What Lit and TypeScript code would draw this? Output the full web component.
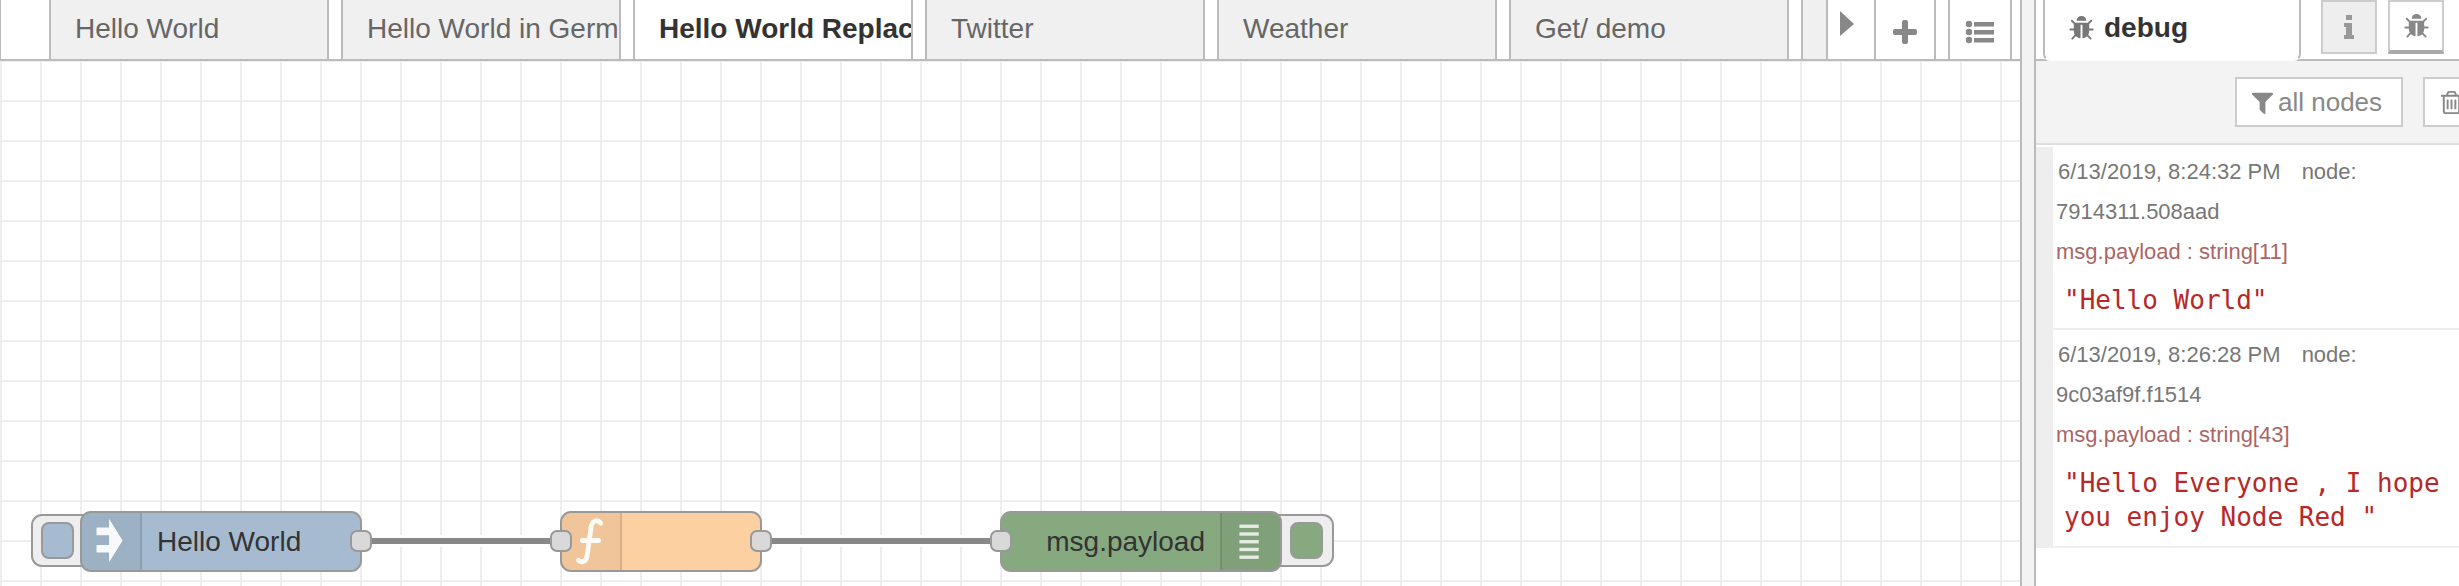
import { LitElement, html, css, svg } from "lit";
import { customElement } from "lit/decorators.js";

const BUG = "M1696 960q0 26-19 45t-45 19h-224q0 171-67 290l208 209q19 19 19 45t-19 45q-18 19-45 19t-45-19l-198-197q-5 5-15 13t-42 28.500-65 36.500-82 29-97 13v-896h-128v896q-51 0-101.500-13.500t-87-33-66-39-43.500-32.500l-15-14-183 207q-20 21-48 21-24 0-43-16-19-18-20.500-44.500t15.500-46.500l202-227q-58-114-58-274h-224q-26 0-45-19t-19-45 19-45 45-19h224v-294l-173-173q-19-19-19-45t19-45 45-19 45 19l173 173h844l173-173q19-19 45-19t45 19 19 45-19 45l-173 173v294h224q26 0 45 19t19 45zm-480-576h-640q0-133 93.500-226.500t226.500-93.500 226.500 93.500 93.500 226.500z";
const FILTER = "M1595 295q17 41-14 70l-493 493v742q0 42-39 59-13 5-25 5-27 0-45-19l-256-256q-19-19-19-45v-486l-493-493q-31-29-14-70 17-39 59-39h1280q42 0 59 39z";
const TRASH = "M704 736v576q0 14-9 23t-23 9h-64q-14 0-23-9t-9-23v-576q0-14 9-23t23-9h64q14 0 23 9t9 23zm256 0v576q0 14-9 23t-23 9h-64q-14 0-23-9t-9-23v-576q0-14 9-23t23-9h64q14 0 23 9t9 23zm256 0v576q0 14-9 23t-23 9h-64q-14 0-23-9t-9-23v-576q0-14 9-23t23-9h64q14 0 23 9t9 23zm128 724v-948h-896v948q0 22 7 40.500t14.500 27 10.500 8.500h832q3 0 10.500-8.500t14.500-27 7-40.500zm-672-1076h448l-48-117q-7-9-17-11h-317q-10 2-17 11zm928 32v64q0 14-9 23t-23 9h-96v948q0 83-47 143.500t-113 60.500h-832q-66 0-113-58.500t-47-141.500v-952h-96q-14 0-23-9t-9-23v-64q0-14 9-23t23-9h309l70-167q15-37 54-63t79-26h320q40 0 79 26t54 63l70 167h309q14 0 23 9t9 23z";

const fa = (d: string, size: number, fill = "#888") => html`<svg class="fa" width=${size} height=${size} viewBox="0 0 1792 1792"><path d=${d} fill=${fill}></path></svg>`;

const TABS = ["Hello World", "Hello World in German", "Hello World Replace", "Twitter", "Weather", "Get/ demo"];

const MESSAGES = [
  { date: "6/13/2019, 8:24:32 PM", id: "7914311.508aad", type: "msg.payload : string[11]", value: '"Hello World"' },
  { date: "6/13/2019, 8:26:28 PM", id: "9c03af9f.f1514", type: "msg.payload : string[43]", value: '"Hello Everyone , I hope you enjoy Node Red "' },
];

@customElement("app-root")
export class AppRoot extends LitElement {
  static styles = css`
    :host { display: block; width: 2459px; height: 586px; overflow: hidden; background: #fff; font-family: "Liberation Sans", Arial, sans-serif; }
    * { box-sizing: border-box; }
    .fa { display: block; flex: none; }
    .app { display: flex; width: 2459px; height: 586px; }
    .main { width: 2020px; display: flex; flex-direction: column; flex: none; }
    .tabbar { height: 61px; flex: none; display: flex; border-bottom: 2px solid #bbb; border-left: 1px solid #bbb; padding-left: 48px; gap: 12px; overflow: hidden; }
    .tab { width: 280px; height: 59px; flex: none; background: #f0f0f0; border: solid #bbb; border-width: 0 2px; padding-left: 24px; font-size: 28px; line-height: 58px; color: #666; white-space: nowrap; overflow: hidden; }
    .tab.active { height: 61px; background: #fff; color: #333; font-weight: 700; }
    .tab.stub { width: 25px; padding: 0; border-right: 0; margin-right: -12px; }
    .tbtn { flex: none; height: 59px; background: #fff; border: solid #bbb; border-width: 0 2px; display: flex; justify-content: center; }
    .tbtn.arrow { width: 50px; margin-right: -14px; padding: 11px 0 0 11px; justify-content: flex-start; }
    .tbtn.plus { width: 62px; padding-top: 20px; }
    .tbtn.list { width: 64px; padding-top: 20px; }
    .workspace { flex: 1; position: relative; overflow: hidden;
      background-color: #fff;
      background-image: linear-gradient(#eee 2px, transparent 2px), linear-gradient(90deg, #eee 2px, transparent 2px);
      background-size: 40px 40px; background-position: 0 39px, 0 0; }
    .wire { position: absolute; top: 474px; height: 12px; background: #fff; display: flex; align-items: center; }
    .wire::after { content: ""; display: block; width: 100%; height: 6px; background: #888; }
    .w1 { left: 372px; width: 180px; }
    .w2 { left: 772px; width: 220px; }
    .node { position: absolute; top: 450px; height: 61px; border: 2px solid #999; border-radius: 11px; font-size: 28px; color: #333; display: flex; align-items: center; }
    .n1 { left: 80px; width: 282px; background: #a6bbcf; }
    .n2 { left: 560px; width: 202px; background: #fdd0a2; }
    .n3 { left: 1000px; width: 282px; background: #87a980; justify-content: flex-end; }
    .ico { width: 60px; height: 57px; flex: none; background: rgba(0,0,0,.05); display: block; }
    .ico.l { border-right: 2px solid rgba(0,0,0,.1); border-radius: 9px 0 0 9px; }
    .ico.r { border-left: 2px solid rgba(0,0,0,.1); border-radius: 0 9px 9px 0; }
    .lbl { white-space: nowrap; }
    .n1 .lbl { margin-left: 15px; }
    .n3 .lbl { margin-right: 15px; }
    .port { position: absolute; width: 22px; height: 22px; top: 17px; background: #d9d9d9; border: 2px solid #999; border-radius: 7px; }
    .port.out { right: -12px; }
    .port.in { left: -12px; }
    .inject { position: absolute; left: 31px; top: 453px; width: 56px; height: 53px; background: #eee; border: 2px solid #999; border-right: 0; border-radius: 11px 0 0 11px; padding: 6px 0 0 8px; }
    .debugbtn { position: absolute; left: 1276px; top: 453px; width: 58px; height: 53px; background: #eee; border: 2px solid #999; border-left: 0; border-radius: 0 11px 11px 0; padding: 6px 0 0 14px; }
    .swatch { width: 33px; height: 37px; border: 2px solid #999; border-radius: 8px; }
    .inject .swatch { background: #a6bbcf; }
    .debugbtn .swatch { background: #87a980; }
    .sep { width: 16px; flex: none; background: #f3f3f3; border: solid #bbb; border-width: 0 2px; }
    .side { width: 423px; flex: none; display: flex; flex-direction: column; overflow: hidden; }
    .shead { height: 61px; flex: none; display: flex; border-bottom: 2px solid #bbb; padding-left: 7px; }
    .dtab { width: 258px; height: 61px; flex: none; background: #fff; border: solid #bbb; border-width: 0 2px 2px; border-bottom-color: #fff; border-radius: 0 0 7px 7px; display: flex; align-items: center; padding: 0 0 3px 23px; gap: 9px; font-size: 28px; font-weight: 700; color: #333; }
    .sbtn { width: 56px; height: 54px; flex: none; border: 2px solid #ccc; display: flex; align-items: center; justify-content: center; }
    .sbtn.info { margin-left: 20px; background: #eee; }
    .sbtn.bug { margin-left: 11px; background: #fff; border-bottom: 4px solid #aaa; }
    .tools { height: 84px; flex: none; background: #f3f3f3; border-bottom: 2px solid #ddd; display: flex; padding: 16px 0 0 199px; gap: 20px; }
    .tool { height: 50px; flex: none; background: #fff; border: 2px solid #ccc; display: flex; align-items: center; color: #888; font-size: 26px; }
    .tool.all { width: 168px; padding-left: 12px; gap: 2px; }
    .tool.del { width: 60px; padding-left: 13px; }
    .msgs { margin-top: 2px; display: flex; flex-direction: column; }
    .msg { padding: 5px 10px 11px 3px; border-left: 17px solid #eee; border-bottom: 2px solid #eee; font-size: 22px; }
    .msg + .msg { padding-bottom: 12px; }
    .meta { line-height: 40px; color: #666; width: 340px; }
    .date { margin-left: 2px; color: #777; margin-right: 21px; }
    .nid { color: #777; }
    .type { line-height: 40px; color: #a66; }
    .value { margin: 11px 0 0 8px; font: 26px/34px "DejaVu Sans Mono", "Liberation Mono", monospace; color: #b72828; width: 395px; }
  `;

  render() {
    return html`<div class="app">
      <div class="main">
        <div class="tabbar">
          ${TABS.map((t, i) => html`<div class="tab ${i === 2 ? "active" : ""}">${t}</div>`)}
          <div class="tab stub"></div>
          <div class="tbtn arrow"><svg width="16" height="26" viewBox="0 0 16 26"><path d="M1 0 15 13 1 25z" fill="#888"></path></svg></div>
          <div class="tbtn plus"><svg width="24" height="24" viewBox="0 0 24 24"><path d="M9 2q0-2 2-2h2q2 0 2 2v7h7q2 0 2 2v2q0 2-2 2h-7v7q0 2-2 2h-2q-2 0-2-2v-7H2q-2 0-2-2v-2q0-2 2-2h7z" fill="#888"></path></svg></div>
          <div class="tbtn list"><svg width="30" height="24" viewBox="0 0 30 24"><g fill="#888"><circle cx="4" cy="4" r="3.2"></circle><circle cx="4" cy="12" r="3.2"></circle><circle cx="4" cy="20" r="3.2"></circle><rect x="9" y="2" width="20" height="4.500"></rect><rect x="9" y="10" width="20" height="4.500"></rect><rect x="9" y="18" width="20" height="4.500"></rect></g></svg></div>
        </div>
        <div class="workspace">
          <div class="wire w1"></div>
          <div class="wire w2"></div>
          <div class="inject"><div class="swatch"></div></div>
          <div class="debugbtn"><div class="swatch"></div></div>
          <div class="node n1">
            <svg class="ico l" viewBox="0 0 60 57"><path d="M15 14H28V5L42 27.500 28 50V40H15V32H28V22H15Z" fill="#fff" opacity=".92"></path></svg>
            <span class="lbl">Hello World</span>
            <div class="port out"></div>
          </div>
          <div class="node n2">
            <svg class="ico l" viewBox="0 0 60 57"><path d="M40 9.500C36 5 31 7 30 14l-4 29c-1 6-5 8-9 5M21 27.500h17" fill="none" stroke="#fff" stroke-width="5" stroke-linecap="round" opacity=".92"></path></svg>
            <div class="port in"></div>
            <div class="port out"></div>
          </div>
          <div class="node n3">
            <span class="lbl">msg.payload</span>
            <svg class="ico r" viewBox="0 0 60 57">${[11, 19, 27, 35, 43].map((y) => svg`<rect x="18" y=${y} width="20" height="3.500" fill="#fff" opacity=".8"></rect>`)}</svg>
            <div class="port in"></div>
          </div>
        </div>
      </div>
      <div class="sep"></div>
      <div class="side">
        <div class="shead">
          <div class="dtab">${fa(BUG, 27, "#777")}<span>debug</span></div>
          <div class="sbtn info"><svg width="10" height="24" viewBox="0 0 10 24"><path d="M2 0h6v5H2zM0 8h8v12h2v4H0v-4h2v-8H0z" fill="#999"></path></svg></div>
          <div class="sbtn bug">${fa(BUG, 27)}</div>
        </div>
        <div class="tools">
          <div class="tool all">${fa(FILTER, 27)}<span>all nodes</span></div>
          <div class="tool del">${fa(TRASH, 27)}</div>
        </div>
        <div class="msgs">
          ${MESSAGES.map((m) => html`<div class="msg">
            <div class="meta"><span class="date">${m.date}</span><span class="nid">node:</span> <span class="nid">${m.id}</span></div>
            <div class="type">${m.type}</div>
            <div class="value">${m.value}</div>
          </div>`)}
        </div>
      </div>
    </div>`;
  }
}
